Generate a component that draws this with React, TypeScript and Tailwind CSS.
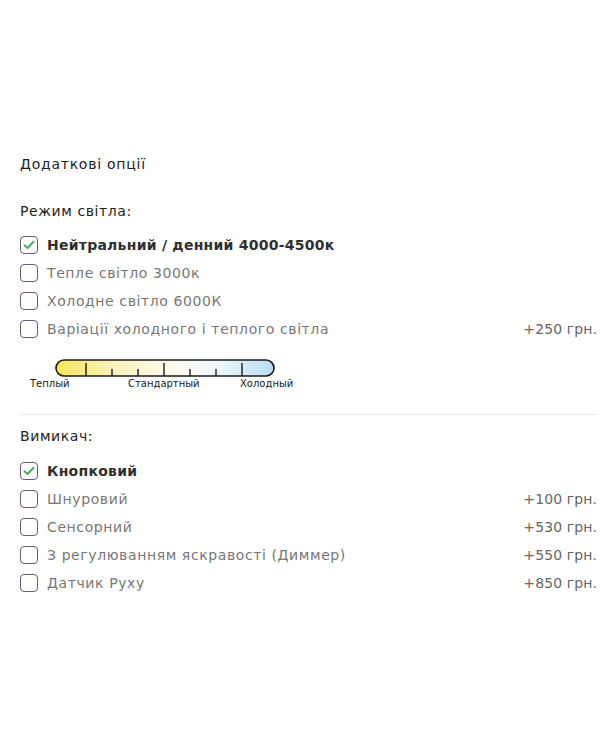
import React from "react";

type Option = { label: string; price?: string; checked?: boolean };

const lightModes: Option[] = [
  { label: "Нейтральний / денний 4000-4500к", checked: true },
  { label: "Тепле світло 3000к" },
  { label: "Холодне світло 6000К" },
  { label: "Варіації холодного і теплого світла", price: "+250 грн." },
];

const switches: Option[] = [
  { label: "Кнопковий", checked: true },
  { label: "Шнуровий", price: "+100 грн." },
  { label: "Сенсорний", price: "+530 грн." },
  { label: "З регулюванням яскравості (Диммер)", price: "+550 грн." },
  { label: "Датчик Руху", price: "+850 грн." },
];

function Box({ checked }: { checked?: boolean }) {
  return (
    <span className="flex h-[18px] w-[18px] shrink-0 items-center justify-center rounded-[4px] border-[1.5px] border-[#6e5a7e] bg-white">
      {checked && (
        <svg width="12" height="10" viewBox="0 0 12 10">
          <path d="M1.5 5.2 L4.6 8 L10.5 1.8" fill="none" stroke="#4cae5a" strokeWidth="2" strokeLinecap="round" strokeLinejoin="round" />
        </svg>
      )}
    </span>
  );
}

function Row({ o }: { o: Option }) {
  return (
    <div className="flex h-[28px] items-center">
      <Box checked={o.checked} />
      <span
        className={
          "ml-[9px] flex-1 " +
          (o.checked
            ? "text-[14px] font-bold tracking-[0.25px] text-[#2f2f2f]"
            : "text-[14px] tracking-[0.6px] text-[#777]")
        }
      >
        {o.label}
      </span>
      {o.price && <span className="text-[14px] tracking-[0.1px] text-[#666]">{o.price}</span>}
    </div>
  );
}

function Gauge() {
  const ticks = [
    { x: 86, major: true },
    { x: 112 },
    { x: 138 },
    { x: 164, major: true },
    { x: 190 },
    { x: 216 },
    { x: 242, major: true },
  ];
  return (
    <svg width="300" height="36" viewBox="0 0 300 36" className="block">
      <defs>
        <linearGradient id="tone" x1="0" x2="1" y1="0" y2="0">
          <stop offset="0" stopColor="#f9e65a" />
          <stop offset="0.25" stopColor="#fbf1b8" />
          <stop offset="0.55" stopColor="#fffdf4" />
          <stop offset="0.75" stopColor="#eef6fb" />
          <stop offset="1" stopColor="#b6dcf2" />
        </linearGradient>
      </defs>
      <rect x="56" y="1" width="218" height="16" rx="8" fill="url(#tone)" stroke="#1a1a1a" strokeWidth="1.6" />
      {ticks.map((t) => (
        <line key={t.x} x1={t.x} x2={t.x} y1={t.major ? 4 : 10} y2="17" stroke="#1a1a1a" strokeWidth="1.4" />
      ))}
      <g fontFamily="'DejaVu Sans', Verdana, sans-serif" fontSize="10" fill="#1a1a1a">
        <text x="30" y="28">Теплый</text>
        <text x="128" y="28">Стандартный</text>
        <text x="240" y="28">Холодный</text>
      </g>
    </svg>
  );
}

export default function App() {
  return (
    <div className="min-h-[750px] w-[600px] bg-white pt-[154px] font-['DejaVu_Sans',sans-serif]">
      <div className="pl-[20px] pr-[3px]">
        <div className="text-[14px] tracking-[0.75px] text-[#222]">Додаткові опції</div>
        <div className="mt-[26px] text-[14px] tracking-[0.6px] text-[#222]">Режим світла:</div>
        <div className="mt-[9px]">
          {lightModes.map((o) => (
            <Row key={o.label} o={o} />
          ))}
        </div>
        <div className="mt-[16px] -ml-[20px]">
          <Gauge />
        </div>
        <div className="mt-[19px] h-px bg-[#ececec]" />
        <div className="mt-[11px] text-[14px] tracking-[0.6px] text-[#222]">Вимикач:</div>
        <div className="mt-[10px]">
          {switches.map((o) => (
            <Row key={o.label} o={o} />
          ))}
        </div>
      </div>
    </div>
  );
}
